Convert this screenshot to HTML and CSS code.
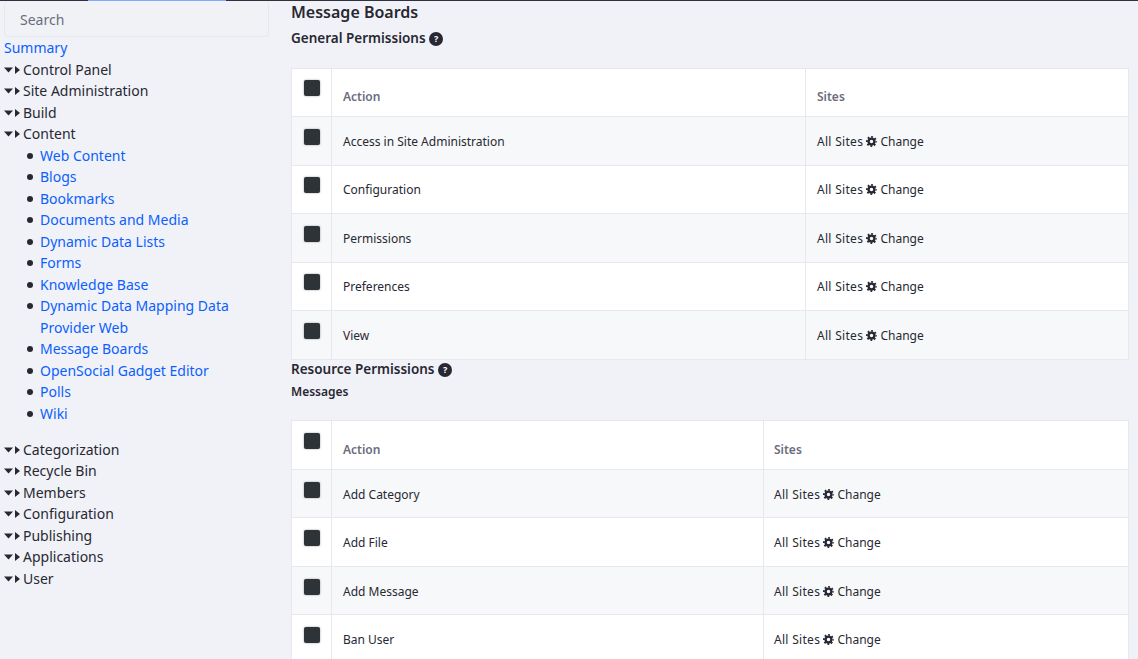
FILE: index.html
```html
<!DOCTYPE html>
<html lang="en">

<head>
    <meta charset="UTF-8">
    <title>Message Boards</title>
    <link rel="stylesheet" href="styles.css">
</head>

<body>
    <svg class="sprites" width="0" height="0">
        <symbol id="carets" viewBox="0 0 17 8">
            <path d="M0 1.500h9l-4.500 5z"></path>
            <path d="M11 0l5 4-5 4z"></path>
        </symbol>
        <symbol id="gear" viewBox="0 0 12 12">
            <circle class="gear-ring" cx="6" cy="6" r="3.200"></circle>
            <circle class="gear-teeth" cx="6" cy="6" r="5"></circle>
        </symbol>
    </svg>

    <div class="topbar"><span class="topbar-tab"></span></div>

    <div class="page">
        <nav class="sidebar">
            <div class="search">Search</div>
            <a class="link summary" href="#">Summary</a>
            <ul class="tree">
                <li><svg class="carets"><use href="#carets"></use></svg>Control Panel</li>
                <li><svg class="carets"><use href="#carets"></use></svg>Site Administration</li>
                <li><svg class="carets"><use href="#carets"></use></svg>Build</li>
                <li><svg class="carets"><use href="#carets"></use></svg>Content
                    <ul class="subtree">
                        <li><a class="link" href="#">Web Content</a></li>
                        <li><a class="link" href="#">Blogs</a></li>
                        <li><a class="link" href="#">Bookmarks</a></li>
                        <li><a class="link" href="#">Documents and Media</a></li>
                        <li><a class="link" href="#">Dynamic Data Lists</a></li>
                        <li><a class="link" href="#">Forms</a></li>
                        <li><a class="link" href="#">Knowledge Base</a></li>
                        <li><a class="link" href="#">Dynamic Data Mapping Data Provider Web</a></li>
                        <li><a class="link" href="#">Message Boards</a></li>
                        <li><a class="link" href="#">OpenSocial Gadget Editor</a></li>
                        <li><a class="link" href="#">Polls</a></li>
                        <li><a class="link" href="#">Wiki</a></li>
                    </ul>
                </li>
                <li><svg class="carets"><use href="#carets"></use></svg>Categorization</li>
                <li><svg class="carets"><use href="#carets"></use></svg>Recycle Bin</li>
                <li><svg class="carets"><use href="#carets"></use></svg>Members</li>
                <li><svg class="carets"><use href="#carets"></use></svg>Configuration</li>
                <li><svg class="carets"><use href="#carets"></use></svg>Publishing</li>
                <li><svg class="carets"><use href="#carets"></use></svg>Applications</li>
                <li><svg class="carets"><use href="#carets"></use></svg>User</li>
            </ul>
        </nav>

        <main class="content">
            <h1 class="title">Message Boards</h1>
            <h2 class="section general">General Permissions <span class="help">?</span></h2>

            <table class="perm perm-general">
                <thead>
                    <tr><td class="check"><span class="box"></span></td><th>Action</th><th>Sites</th></tr>
                </thead>
                <tbody>
                    <tr><td class="check"><span class="box"></span></td><td>Access in Site Administration</td><td><span class="scope">All Sites</span> <svg class="gear"><use href="#gear"></use></svg> Change</td></tr>
                    <tr><td class="check"><span class="box"></span></td><td>Configuration</td><td><span class="scope">All Sites</span> <svg class="gear"><use href="#gear"></use></svg> Change</td></tr>
                    <tr><td class="check"><span class="box"></span></td><td>Permissions</td><td><span class="scope">All Sites</span> <svg class="gear"><use href="#gear"></use></svg> Change</td></tr>
                    <tr><td class="check"><span class="box"></span></td><td>Preferences</td><td><span class="scope">All Sites</span> <svg class="gear"><use href="#gear"></use></svg> Change</td></tr>
                    <tr><td class="check"><span class="box"></span></td><td>View</td><td><span class="scope">All Sites</span> <svg class="gear"><use href="#gear"></use></svg> Change</td></tr>
                </tbody>
            </table>

            <h2 class="section">Resource Permissions <span class="help">?</span></h2>
            <h3 class="resource">Messages</h3>

            <table class="perm perm-resource">
                <thead>
                    <tr><td class="check"><span class="box"></span></td><th>Action</th><th>Sites</th></tr>
                </thead>
                <tbody>
                    <tr><td class="check"><span class="box"></span></td><td>Add Category</td><td><span class="scope">All Sites</span> <svg class="gear"><use href="#gear"></use></svg> Change</td></tr>
                    <tr><td class="check"><span class="box"></span></td><td>Add File</td><td><span class="scope">All Sites</span> <svg class="gear"><use href="#gear"></use></svg> Change</td></tr>
                    <tr><td class="check"><span class="box"></span></td><td>Add Message</td><td><span class="scope">All Sites</span> <svg class="gear"><use href="#gear"></use></svg> Change</td></tr>
                    <tr><td class="check"><span class="box"></span></td><td>Ban User</td><td><span class="scope">All Sites</span> <svg class="gear"><use href="#gear"></use></svg> Change</td></tr>
                </tbody>
            </table>
        </main>
    </div>
</body>

</html>
```

FILE: styles.css
```css
* {
    margin: 0;
    padding: 0;
    box-sizing: border-box;
}

html,
body {
    height: 100%;
    overflow: hidden;
}

body {
    background-color: #f1f2f7;
    color: #272833;
    font-family: "Noto Sans", sans-serif;
    font-size: 14px;
}

.sprites {
    display: block;
    height: 0;
}

.topbar {
    height: 1px;
    background-color: #30313f;
}

.topbar-tab {
    display: block;
    width: 138px;
    height: 1px;
    margin-left: 88px;
    background-color: #80acff;
}

.page {
    display: flex;
    align-items: flex-start;
}

.sidebar {
    width: 291px;
    padding-left: 4px;
    flex-shrink: 0;
    line-height: 21.5px;
}

.search {
    width: 265px;
    height: 36px;
    padding: 8px 15px;
    background-color: #f1f2f5;
    border: 1px solid #e7e7ed;
    border-top: 0;
    border-radius: 4px;
    color: #6b6c7e;
}

.link {
    color: #0b5fff;
    text-decoration: none;
}

.summary {
    display: block;
}

.tree {
    list-style: none;
}

.carets {
    width: 17px;
    height: 8px;
    margin-right: 2px;
    fill: #272833;
    vertical-align: 1px;
}

.subtree {
    list-style: none;
    width: 232px;
    padding-left: 23px;
    margin-bottom: 14.500px;
}

.subtree li {
    display: flex;
    gap: 7px;
}

.subtree li::before {
    content: "";
    flex-shrink: 0;
    width: 6px;
    height: 6px;
    margin-top: 8px;
    border-radius: 50%;
    background-color: #272833;
}

.content {
    flex: 1;
    min-width: 0;
    padding-right: 9px;
}

.title {
    font-size: 16px;
    font-weight: 600;
    line-height: 22px;
}

.section {
    font-size: 13.500px;
    font-weight: 600;
    line-height: 18px;
}

.general {
    margin-top: 6px;
}

.help {
    display: inline-block;
    width: 14px;
    height: 14px;
    border-radius: 50%;
    background-color: #272833;
    color: #fff;
    font-size: 9px;
    font-weight: 700;
    line-height: 14px;
    text-align: center;
    vertical-align: 1px;
}

.resource {
    font-size: 12px;
    font-weight: 600;
    line-height: 18px;
    margin-top: 5px;
}

.perm {
    width: 100%;
    table-layout: fixed;
    border-collapse: collapse;
    background-color: #fff;
    font-size: 12px;
    line-height: 18px;
}

.perm-general {
    margin-top: 20.900px;
}

.perm-resource {
    margin-top: 19.400px;
}

.perm tr {
    height: 48.500px;
}

.perm td,
.perm th {
    padding: 1px 11px 0;
    border: 1px solid #e7e7ed;
    text-align: left;
    vertical-align: middle;
}

.perm th {
    padding-top: 8px;
    font-weight: 600;
    color: #6b6c7e;
}

.perm-resource th {
    padding-top: 10px;
}

.perm-resource tbody td {
    padding-top: 2px;
}

.perm tbody tr:nth-child(odd) {
    background-color: #f7f8f9;
}

.perm .check {
    width: 40px;
    padding: 11.500px 0 0 12px;
    vertical-align: top;
}

.perm-resource .check {
    padding-top: 12px;
}

.perm-general td:nth-child(2),
.perm-general th:nth-child(2) {
    width: 474px;
}

.perm-resource td:nth-child(2),
.perm-resource th:nth-child(2) {
    width: 432px;
}

.perm-resource td:nth-child(3),
.perm-resource th:nth-child(3) {
    padding-left: 10px;
}

.box {
    display: block;
    width: 16px;
    height: 16px;
    border-radius: 2px;
    background-color: #2e3338;
    box-shadow: 0 0 2px rgba(39, 40, 51, 0.5);
}

.scope {
    letter-spacing: 0.300px;
}

.gear {
    width: 11px;
    height: 11px;
    vertical-align: -1px;
}

.gear-ring {
    fill: none;
    stroke: #272833;
    stroke-width: 2.600;
}

.gear-teeth {
    fill: none;
    stroke: #272833;
    stroke-width: 2;
    stroke-dasharray: 1.900 2.027;
    stroke-dashoffset: 0.950;
}
```
